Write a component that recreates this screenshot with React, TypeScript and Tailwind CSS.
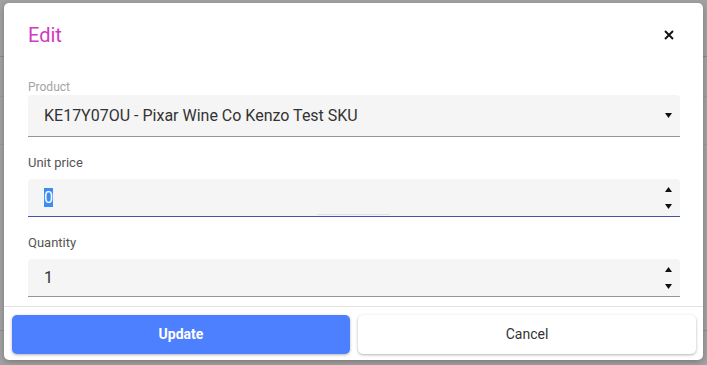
import React from "react";

const Up = () => (
  <svg width="7" height="5" viewBox="0 0 7 5" className="block">
    <path d="M3.5 0L7 5H0z" fill="#111" />
  </svg>
);

const Down = () => (
  <svg width="7" height="5" viewBox="0 0 7 5" className="block">
    <path d="M0 0h7L3.5 5z" fill="#111" />
  </svg>
);

const Spinner = () => (
  <div className="flex flex-col gap-[12px] mr-[8px] mt-[1px]">
    <Up />
    <Down />
  </div>
);

export default function App() {
  return (
    <div
      className="relative h-[365px] w-[707px] overflow-hidden bg-[#a2a2a2] pt-[3px] pl-[4px]"
      style={{ fontFamily: "Roboto, 'Liberation Sans', sans-serif" }}
    >
      {/* table behind the overlay */}
      <div className="absolute inset-0 flex flex-col">
        <div className="h-[57px] border-b border-[#8a8a8a]" />
        <div className="h-[40px] border-b border-[#999]" />
        <div className="h-[48px] border-b border-[#999]" />
        <div className="h-[186px] border-b border-[#8e8e8e]" />
      </div>

      {/* dialog */}
      <div className="relative flex h-[357px] w-[699px] flex-col overflow-hidden rounded-[5px] bg-white shadow-[0_2px_6px_rgba(0,0,0,0.25)]">
        <div className="flex h-[64px] shrink-0 items-center justify-between pl-6 pr-[22px]">
          <h2 className="text-[20px] font-normal leading-none text-[#cf3cbf]">Edit</h2>
          <button className="flex h-6 w-6 items-center justify-center">
            <svg width="10" height="10" viewBox="0 0 10 10">
              <path d="M1 1l8 8M9 1l-8 8" stroke="#111" strokeWidth="1.9" />
            </svg>
          </button>
        </div>

        <div className="flex-1 overflow-hidden pl-6 pr-[23px] pt-[13px]">
          <label className="mb-[1px] block text-[12px] leading-[14px] text-[#a3a3a3]">Product</label>
          <div className="flex h-[42px] items-center justify-between rounded-t-[4px] border-b border-[#949494] bg-[#f5f5f5] pl-4 pr-[8px]">
            <span className="text-[16px] text-[#333]">KE17Y07OU - Pixar Wine Co Kenzo Test SKU</span>
            <Down />
          </div>

          <label className="mt-[18px] mb-2 block text-[13px] leading-4 text-[#555]">Unit price</label>
          <div className="relative flex h-[38px] items-center justify-between rounded-t-[4px] border-b border-[#4452a8] bg-[#f5f5f5] pl-4">
            <span className="bg-[#3a8cf6] text-[16px] leading-[19px] text-white">0</span>
            <Spinner />
            <span className="absolute bottom-[1px] left-[289px] h-[1px] w-[73px] bg-[#dfe2f2]" />
          </div>

          <label className="mt-[18px] mb-2 block text-[13px] leading-4 text-[#555]">Quantity</label>
          <div className="flex h-[38px] items-center justify-between rounded-t-[4px] border-b border-[#949494] bg-[#f5f5f5] pl-4">
            <span className="text-[16px] text-[#333]">1</span>
            <Spinner />
          </div>
        </div>

        <div className="flex h-[54px] shrink-0 gap-2 border-t border-[#e3e3e3] pl-2 pr-[7px] pt-2 pb-[6px]">
          <button className="flex-1 rounded-[5px] bg-[#4d80ff] text-[14px] font-bold text-white shadow-[0_1px_3px_rgba(0,0,0,0.3)]">
            Update
          </button>
          <button className="flex-1 rounded-[5px] bg-white text-[14px] text-[#333] shadow-[0_1px_3px_rgba(0,0,0,0.3)]">
            Cancel
          </button>
        </div>
      </div>
    </div>
  );
}
